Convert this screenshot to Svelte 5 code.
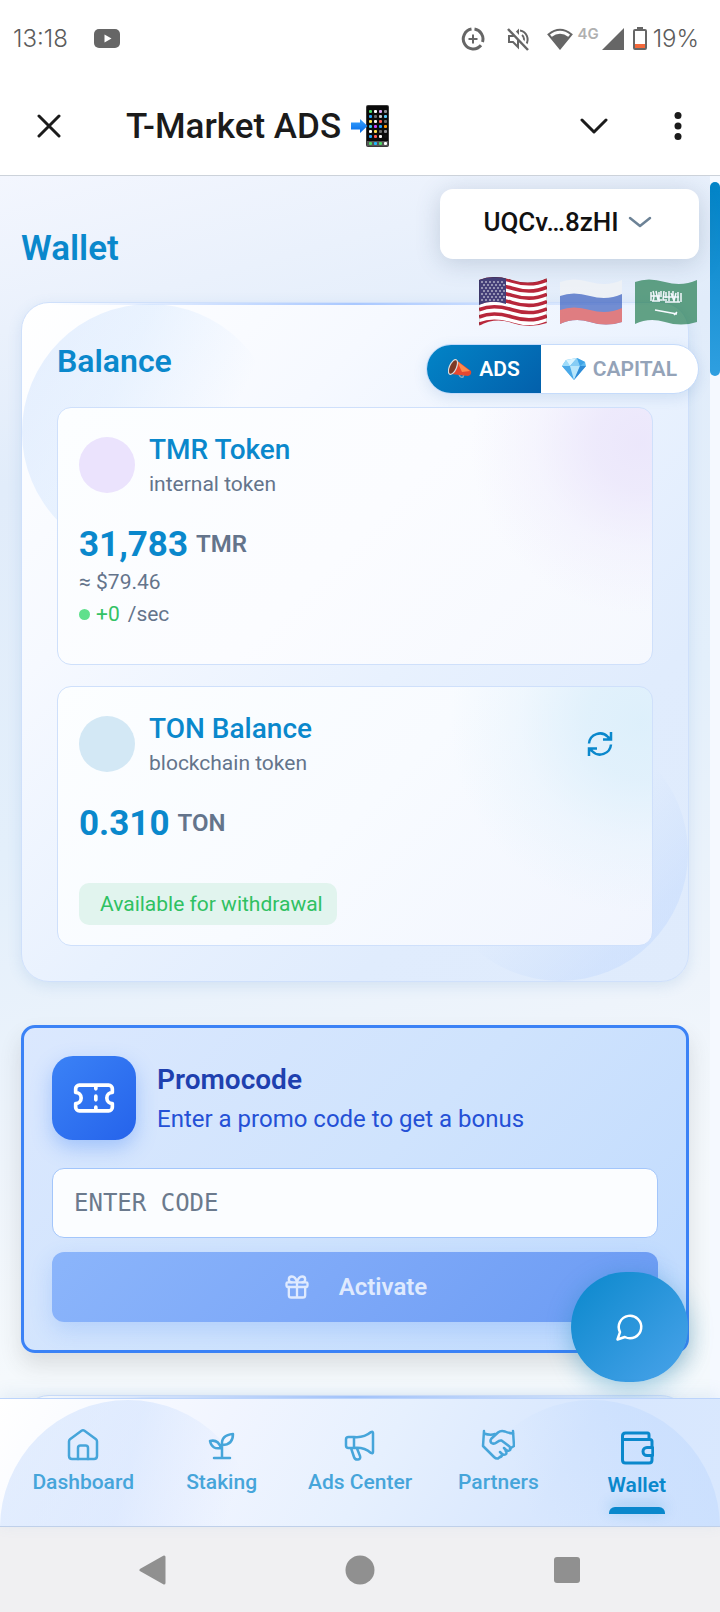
<script>
  let mode = $state('ads');
  let lang = $state('en');
  let code = $state('');
  let activeTab = $state('Wallet');

  const TABS = ['Dashboard', 'Staking', 'Ads Center', 'Partners', 'Wallet'];

  const APP_DOTS = [
    ['#4cd964', '#ffffff', '#d9a3f5', '#8e8e93'],
    ['#1fa2ff', '#6b6b6b', '#c9c9c9', '#5ac8fa'],
    ['#ffe14d', '#f5f5f5', '#ff5a4f', '#6b6b6b'],
    ['#34c8e8', '#c643fc', '#1fa2ff', '#ff9500'],
    ['#ffffff', '#ffe14d', '#6b6b6b', '#8e8e93'],
    ['#1fa2ff', '#ff5a4f', '#f5f5f5', '#111111'],
  ];
  const DOCK_DOTS = ['#4cd964', '#1fb6ff', '#4cd964', '#ffffff'];

  const STARS = [0, 1, 2, 3, 4, 5, 6].flatMap((r) => [0, 1, 2, 3, 4, 5].map((c) => [4 + c * 4 + (r % 2) * 2, 5 + r * 3]));
</script>

<div class="screen">
  <header class="status-bar">
    <span class="clock">13:18</span>
    <svg class="yt" width="26" height="19" viewBox="0 0 26 19"><rect width="26" height="19" rx="5" fill="#666" /><path d="M10.500 5.500v8l7-4z" fill="#fff" /></svg>
    <div class="spacer"></div>
    <svg class="saver" width="24" height="24" viewBox="0 0 24 24" fill="none" stroke="#666">
      <path d="M13.500 2.100A10 10 0 0 1 21.500 15M20 18.300A10 10 0 1 1 10.500 2.100" stroke-width="3" />
      <path d="M12 7.500v9M7.500 12h9" stroke-width="2" />
    </svg>
    <svg class="mute" width="24" height="24" viewBox="0 0 24 24" fill="none" stroke="#666" stroke-width="2">
      <path d="M2 9h4l5-5v16l-5-5H2zM15 8a5 5 0 0 1 0 8M13 3.500a9 9 0 0 1 6 14" />
      <path d="M3 1l19 21" stroke="#fff" stroke-width="4" />
      <path d="M1 2l20 21" stroke-width="2.500" />
    </svg>
    <svg class="wifi" width="26" height="22" viewBox="0 0 26 22"><path d="M1.500 6.500Q13-3 24.500 6.500L13 20.500z" fill="#fff" stroke="#666" stroke-width="2" /><path d="M4.500 9Q13 2.500 21.500 9L13 20.500z" fill="#666" /></svg>
    <span class="net">4G</span>
    <svg class="signal" width="22" height="22" viewBox="0 0 22 22"><path d="M22 0v22H0z" fill="#666" /></svg>
    <svg class="battery" width="14" height="23" viewBox="0 0 14 23"><path d="M4 0h6v3H4z" fill="#666" /><rect x="1" y="3" width="12" height="19" rx="1" fill="#fff" stroke="#666" stroke-width="2" /><path d="M2 17h10v4H2z" fill="#f4693b" /></svg>
    <span class="pct">19%</span>
  </header>

  <div class="title-bar">
    <button class="icon-btn" aria-label="Close">
      <svg width="24" height="24" viewBox="0 0 24 24" fill="none" stroke="#1b1b1b" stroke-width="3" stroke-linecap="round"><path d="M2 2l20 20M22 2L2 22" /></svg>
    </button>
    <h1>T-Market ADS</h1>
    <svg class="phone" width="39" height="42" viewBox="0 0 39 42">
      <defs><linearGradient id="arrow" x2="0" y2="1"><stop stop-color="#3ba4ff" /><stop offset="1" stop-color="#0069e8" /></linearGradient></defs>
      <rect x="15" width="23" height="42" rx="2" fill="#3a3a3a" /><rect x="16" y="1" width="21" height="40" rx="1" fill="#0a0a0a" />
      {#each APP_DOTS as row, r (r)}
        {#each row as fill, c (c)}
          <rect x={18 + c * 5} y={5 + r * 5} width="3" height="3" rx="1" {fill} />
        {/each}
      {/each}
      <rect x="16" y="36" width="21" height="5" fill="#555" />
      {#each DOCK_DOTS as fill, c (c)}
        <rect x={18 + c * 5} y="37" width="3" height="3" rx="1" {fill} />
      {/each}
      <path d="M0 17.500h9V14l7.500 7L9 28v-3.500H0z" fill="url(#arrow)" />
    </svg>
    <div class="spacer"></div>
    <button class="icon-btn" aria-label="Minimize">
      <svg width="28" height="16" viewBox="0 0 28 16" fill="none" stroke="#1b1b1b" stroke-width="3" stroke-linecap="round" stroke-linejoin="round"><path d="M2 2l12 12L26 2" /></svg>
    </button>
    <button class="icon-btn more" aria-label="More">
      <svg width="8" height="28" viewBox="0 0 8 28" fill="#1b1b1b"><circle cx="4" cy="3.500" r="3.500" /><circle cx="4" cy="14" r="3.500" /><circle cx="4" cy="24.500" r="3.500" /></svg>
    </button>
  </div>

  <div class="viewport">
    <main>
      <h2>Wallet</h2>

      <section class="card glass">
        <h3>Balance</h3>

        <article class="token tmr">
          <div class="token-head">
            <span class="coin"></span>
            <div>
              <h4>TMR Token</h4>
              <p class="muted">internal token</p>
            </div>
          </div>
          <div class="amount"><strong>31,783</strong><span>TMR</span></div>
          <p class="muted line">≈ $79.46</p>
          <p class="muted line rate"><i class="dot"></i><span class="plus">+0</span>/sec</p>
        </article>

        <article class="token ton">
          <div class="token-head">
            <span class="coin"></span>
            <div>
              <h4>TON Balance</h4>
              <p class="muted">blockchain token</p>
            </div>
            <button class="refresh" aria-label="Refresh">
              <svg width="26" height="26" viewBox="0 0 26 26" fill="none" stroke="#0a88cc" stroke-width="2.500">
                <path d="M2 12.500A11 11 0 0 1 21 6l3 2.500M24 1v7.500h-8" />
                <path d="M24 13.500A11 11 0 0 1 5 20l-3-2.500M2 25v-7.500h8" />
              </svg>
            </button>
          </div>
          <div class="amount"><strong>0.310</strong><span>TON</span></div>
          <span class="badge">Available for withdrawal</span>
        </article>
      </section>

      <section class="promo">
        <div class="promo-head">
          <span class="promo-icon">
            <svg width="44" height="44" viewBox="0 0 24 24" fill="none" stroke="#fff" stroke-width="2" stroke-linecap="round" stroke-linejoin="round">
              <path d="M2 9a3 3 0 0 1 0 6v2a2 2 0 0 0 2 2h16a2 2 0 0 0 2-2v-2a3 3 0 0 1 0-6V7a2 2 0 0 0-2-2H4a2 2 0 0 0-2 2ZM13 5v2M13 17v2M13 11v2" />
            </svg>
          </span>
          <div>
            <h3>Promocode</h3>
            <p>Enter a promo code to get a bonus</p>
          </div>
        </div>
        <input type="text" aria-label="Promo code" placeholder="ENTER CODE" bind:value={code} />
        <button class="activate" disabled={!code}>
          <svg width="28" height="28" viewBox="0 0 24 24" fill="none" stroke="currentColor" stroke-width="2" stroke-linecap="round" stroke-linejoin="round">
            <rect x="3" y="8" width="18" height="4" rx="1" />
            <path d="M12 8v13M19 12v7a2 2 0 0 1-2 2H7a2 2 0 0 1-2-2v-7M7.500 8a2.500 2.500 0 0 1 0-5A4.800 8 0 0 1 12 8a4.800 8 0 0 1 4.500-5 2.500 2.500 0 0 1 0 5" />
          </svg>
          Activate
        </button>
      </section>

      <section class="card glass next"></section>
    </main>

    <div class="track"><div class="thumb"></div></div>

    <aside class="floating">
      <button class="address">
        UQCv…8zHI
        <svg width="24" height="12" viewBox="0 0 24 12" fill="none" stroke="#6c8296" stroke-width="2.500" stroke-linecap="round" stroke-linejoin="round"><path d="M2 2l10 8 10-8" /></svg>
      </button>

      <div class="flags">
        <button class:active={lang === 'en'} onclick={() => lang = 'en'} aria-label="English">
          <svg width="68" height="50" viewBox="0 0 68 50">
            <clipPath id="us"><path d="M0 3Q14-3 33 3T68 1V46Q50 52 33 46T0 49z" /></clipPath>
            <g clip-path="url(#us)">
              <rect width="68" height="52" fill="#fff" />
              {#each [0, 1, 2, 3, 4, 5, 6] as i (i)}
                <path d="M0 {4 + i * 7.2}Q14 {-2 + i * 7.2} 33 {4 + i * 7.2}T68 {3 + i * 7.2}" fill="none" stroke="#b8273b" stroke-width="3.600" />
              {/each}
              <path d="M0 0h27v27Q12 22 0 28z" fill="#453f78" />
              {#each STARS as [x, y], i (i)}
                <circle cx={x - 1} cy={y} r="0.800" fill="#fff" />
              {/each}
              <path d="M0 49V3Q14-3 33 3T68 1V46" fill="none" stroke="#000" stroke-opacity=".25" />
            </g>
          </svg>
        </button>
        <button class:active={lang === 'ru'} onclick={() => lang = 'ru'} aria-label="Русский">
          <svg width="62" height="46" viewBox="0 0 62 46">
            <clipPath id="ru"><path d="M0 3Q13-2 30 3T62 1V43Q46 48 30 43T0 45z" /></clipPath>
            <g clip-path="url(#ru)">
              <rect width="62" height="46" fill="#f5f5f5" />
              <path d="M0 17Q13 12 30 17T62 15V50H0z" fill="#2149b5" />
              <path d="M0 31Q13 26 30 31T62 29V50H0z" fill="#d62f2f" />
            </g>
          </svg>
        </button>
        <button class:active={lang === 'ar'} onclick={() => lang = 'ar'} aria-label="العربية">
          <svg width="62" height="46" viewBox="0 0 62 46">
            <path d="M0 3Q13-2 30 3T62 1V43Q46 48 30 43T0 45z" fill="#066b35" />
            <path d="M16 13v9M18 12q2 5 0 10M21 12l2 9M24 13v8h3M26 12v6M29 12l-1 9h4M31 13v6M34 12v10M36 14l3 8M38 12v6M41 14l-2 8M43 13v10M46 14v9M16 17h9M17 22h8M29 18h15M30 23h15" stroke="#fff" stroke-width="1.500" fill="none" />
            <path d="M20 31l22 4M39 36l3-3" stroke="#fff" stroke-width="1.500" />
          </svg>
        </button>
      </div>

      <div class="mode">
        <button class:active={mode === 'ads'} onclick={() => mode = 'ads'}>
          <svg width="24" height="22" viewBox="0 0 24 22">
            <path d="M11 16q1 4 4 3l1-3" fill="none" stroke="#8fa7b5" stroke-width="1.500" />
            <path d="M7 1L23 13q1 4-3 5L3 16z" fill="#e8482f" /><path d="M9 3l13 10-8 1z" fill="#ff8a4c" />
            <ellipse cx="5" cy="9" rx="3.500" ry="8" transform="rotate(24 5 9)" fill="#7c3a26" stroke="#d8dde0" stroke-width="1.200" />
          </svg>
          ADS
        </button>
        <button class:active={mode === 'capital'} onclick={() => mode = 'capital'}>
          <svg width="24" height="22" viewBox="0 0 24 22">
            <path d="M4 2L15 0l8 4 1 4-12 14L0 8z" fill="#5cb8ef" />
            <path d="M4 2l4 6H0z" fill="#9edcfa" /><path d="M4 2L15 0 8 8z" fill="#d8f4ff" /><path d="M15 0l3 8H8z" fill="#86cdf5" />
            <path d="M15 0l8 4-5 4z" fill="#3fa3e6" /><path d="M0 8h8l4 14z" fill="#4aa9e8" /><path d="M8 8h10l-6 14z" fill="#b7e6fb" /><path d="M18 8h6L12 22z" fill="#2f8bd6" />
          </svg>
          CAPITAL
        </button>
      </div>
    </aside>

    <button class="fab" aria-label="Chat">
      <svg width="30" height="30" viewBox="0 0 24 24" fill="none" stroke="#fff" stroke-width="2" stroke-linecap="round" stroke-linejoin="round"><path d="M7.900 20A9 9 0 1 0 4 16.100L2 22Z" /></svg>
    </button>
  </div>

  <nav class="tabs glass">
    {#each TABS as tab (tab)}
      <button class:active={activeTab === tab} onclick={() => activeTab = tab}>
        <svg width="34" height="34" viewBox="0 0 34 34" fill="none" stroke="currentColor" stroke-width="2.500" stroke-linecap="round" stroke-linejoin="round">
          {#if tab === 'Dashboard'}
            <path d="M3 13.500q0-1.500 1-2.300L15.500 2.800q1.500-1 3 0L30 11.200q1 .8 1 2.300V28q0 3-3 3H6q-3 0-3-3z" />
            <path d="M12 31V20q0-2.500 2.500-2.500h5Q22 17.500 22 20v11" />
          {:else if tab === 'Staking'}
            <path d="M17 30V17M9 30h16M5 13q8-2 11 7-9 2-11-7zM17 17q-1-10 11-11 0 11-11 11z" />
          {:else if tab === 'Ads Center'}
            <path d="M11 9H5.500Q3 9 3 11.500v6Q3 20 5.500 20H11zM11 9q10 1 17-5 2-1 2 1v19q0 2-2 1-7-6-17-5M8 20l3 9q1 3 4 2.500t2-3.500l-3-7.500" />
          {:else if tab === 'Partners'}
            <path d="M3 3L2 18l5 5 6 6q2 2 4 1.500l2.500-2M32 3l1 15-4 2.500M3 5.500q6 2 11 .5" />
            <path d="M32 5.500q-5-.5-8-2-4-1.500-7 1l-6.500 6q-2 2.500 0 4.500 2.500 1.500 5-.5 3-2.500 5-2l8 6q2 3 0 4t-4-1l-1.500-1.500M24.500 22.500q2 3 0 4t-4-1l-1.500-1.500M20.500 25.500q1.500 2.500-1 3.500" />
          {:else}
            <path d="M2.500 9V5q0-3 3-3h22Q29 2 29 4v4.500M2.500 8.500H30q2 0 2 2V16M2.500 8.500V29q0 3 3 3H29q3 0 3-3v-4" stroke-width="3" />
            <path d="M32 16.500h-5a4 4 0 0 0 0 8h5q.8 0 .8-1v-6q0-1-.8-1z" stroke-width="3" />
          {/if}
        </svg>
        <span>{tab}</span>
      </button>
    {/each}
  </nav>

  <div class="system-nav">
    <button aria-label="Back"><svg width="28" height="30" viewBox="0 0 28 30"><path d="M2 15L25 2v26z" fill="#909090" stroke="#909090" stroke-width="3" stroke-linejoin="round" /></svg></button>
    <button aria-label="Home"><svg width="30" height="30" viewBox="0 0 30 30"><circle cx="15" cy="15" r="14.500" fill="#909090" /></svg></button>
    <button aria-label="Recent apps"><svg width="28" height="28" viewBox="0 0 28 28"><rect x="1" y="1" width="26" height="26" rx="3" fill="#909090" /></svg></button>
  </div>
</div>

<style>
  :global(body) { margin: 0; }

  .screen {
    display: flex;
    flex-direction: column;
    height: 100vh;
    overflow: hidden;
    background: #fff;
    font-family: Roboto, "Liberation Sans", sans-serif;
    color: #64748b;
  }
  h1, h2, h3, h4, p { margin: 0; }
  button { padding: 0; border: none; background: none; font: inherit; color: inherit; cursor: pointer; }
  svg { display: block; flex-shrink: 0; }
  .spacer { flex: 1; }

  .status-bar {
    display: flex;
    align-items: center;
    height: 77px;
    padding: 0 21px 0 13px;
    box-sizing: border-box;
    font-family: Inter, sans-serif;
    font-size: 24px;
    font-weight: 300;
    color: #5c5c5c;
  }
  .yt { margin-left: 26px; }
  .saver { margin-right: 22px; }
  .mute { margin-right: 16px; }
  .net { align-self: flex-start; margin: 24px 3px 0 4px; font-size: 15px; font-weight: 600; color: #b0b0b0; }
  .battery { margin: 0 6px 0 9px; }

  .title-bar {
    display: flex;
    align-items: center;
    height: 98px;
    padding: 0 38px 0 37px;
    border-bottom: 1px solid #ccd2da;
    color: #1b1b1b;
  }
  .title-bar h1 { margin: 0 10px 0 65px; font-size: 35px; font-weight: 500; }
  .more { margin-left: 66px; }

  .viewport {
    position: relative;
    flex: 1;
    display: flex;
    min-height: 0;
    overflow: hidden;
    background: linear-gradient(165deg, #f3f6fe 0%, #e1ecfa 22%, #e3effb 48%, #eef4fb 70%, #f5f9fc 85%, #f4f9fc 100%);
  }
  main {
    flex: 1;
    min-width: 0;
    padding: 53px 21px 0;
  }
  .track { width: 10px; padding-top: 6px; background: #f5f9ff; }
  .thumb { height: 194px; border-radius: 5px; background: linear-gradient(#0284c7, #2f9fe0); }

  h2 { margin-bottom: 33px; font-size: 35px; line-height: 40px; font-weight: 600; color: #0a88cc; }

  .glass {
    position: relative;
    overflow: hidden;
    background:
      linear-gradient(90deg, transparent 4%, #a9c8ff 50%, transparent 96%) top / 100% 2px no-repeat,
      linear-gradient(135deg, #ffffff 0%, #f6f9ff 28%, #e8f1fe 55%, #e0ecfd 75%, #dfebfc 100%);
  }
  .glass > * { position: relative; }
  /* soft corner discs */
  .glass::before,
  .glass::after {
    content: '';
    position: absolute;
    width: 256px;
    height: 256px;
    border-radius: 50%;
    pointer-events: none;
  }
  .glass::before {
    top: 1px;
    left: 0;
    background: linear-gradient(115deg, rgba(191, 215, 252, .4), rgba(191, 219, 254, .3) 35%, rgba(191, 219, 254, 0) 70%);
  }
  .glass::after {
    right: 0;
    bottom: 0;
    background: linear-gradient(315deg, rgba(191, 215, 254, .5), rgba(191, 215, 254, .4) 20%, rgba(191, 219, 254, 0) 48%);
  }

  .card {
    padding: 35px;
    border: 1px solid #cfe0fb;
    border-radius: 28px;
    box-shadow: 0 4px 14px rgba(90, 140, 200, .16);
  }
  .card h3 { margin-bottom: 23px; font-size: 32px; line-height: 46px; font-weight: 600; color: #0a88cc; }

  .token {
    z-index: 1;
    padding: 22px 21px 20px;
    border: 1px solid #cfe0fb;
    border-radius: 14px;
  }
  .token + .token { margin-top: 21px; }
  .tmr {
    background:
      radial-gradient(circle at 98% 14%, rgba(235, 230, 251, .95) 0, rgba(235, 230, 251, .8) 45px, rgba(235, 230, 251, .3) 105px, rgba(235, 230, 251, 0) 170px),
      linear-gradient(135deg, #fcfeff, #fbfcff 50%, #f5f8fe);
  }
  .ton {
    background:
      radial-gradient(circle at 98% 14%, rgba(220, 239, 251, .95) 0, rgba(220, 239, 251, .8) 55px, rgba(220, 239, 251, .3) 120px, rgba(220, 239, 251, 0) 190px),
      linear-gradient(135deg, #fcfeff, #f8fbff 50%, #f1f5fe);
  }
  .token-head { display: flex; align-items: center; gap: 14px; margin-bottom: 23px; }
  .coin { width: 56px; height: 56px; border-radius: 50%; background: #ebe3fd; }
  .ton .coin { background: #d3e8f5; }
  h4 { font-size: 28px; line-height: 39px; font-weight: 500; color: #0a88cc; }
  .muted { font-size: 21px; line-height: 30px; }
  .line { line-height: 32px; }
  .refresh { margin: 0 18px 0 auto; }

  .amount { display: flex; align-items: center; gap: 8px; height: 44px; }
  .amount strong { font-size: 35px; font-weight: 700; color: #0a88cc; }
  .amount span { font-size: 24px; font-weight: 600; }
  .rate { display: flex; align-items: center; gap: 6px; margin-bottom: 14px; }
  .dot { width: 11px; height: 11px; border-radius: 50%; background: #5fe08c; }
  .plus { margin-right: 2px; color: #34c265; }
  .badge {
    display: inline-block;
    margin-top: 38px;
    padding: 0 14px 0 21px;
    border-radius: 10px;
    background: #e1f4ee;
    font-size: 21px;
    line-height: 42px;
    color: #2fc162;
    vertical-align: top;
  }

  .promo {
    margin: 43px 0 42px;
    padding: 28px;
    border: 3px solid #3b82f6;
    border-radius: 14px;
    background: linear-gradient(135deg, #dbe8fe, #cfe3fd 50%, #bfdafe);
    box-shadow: 0 12px 22px rgba(60, 60, 60, .14);
  }
  .promo-head { display: flex; align-items: center; gap: 21px; margin-bottom: 28px; }
  .promo-icon {
    display: grid;
    place-items: center;
    width: 84px;
    height: 84px;
    border-radius: 21px;
    background: linear-gradient(135deg, #3b82f6, #2563eb);
    box-shadow: 0 8px 20px rgba(59, 130, 246, .35);
  }
  .promo h3 { font-size: 28px; line-height: 42px; font-weight: 600; color: #1e40af; }
  .promo p { font-size: 24px; line-height: 36px; color: #2450d6; }
  .promo input {
    display: block;
    width: 100%;
    height: 70px;
    padding: 0 21px;
    box-sizing: border-box;
    border: 1px solid #a3c6fb;
    border-radius: 12px;
    background: #fbfdff;
    font: 24px "DejaVu Sans Mono", monospace;
    color: #1e40af;
  }
  .promo input::placeholder { color: #6b7a8d; opacity: 1; }
  .activate {
    display: flex;
    align-items: center;
    justify-content: center;
    gap: 28px;
    width: 100%;
    height: 70px;
    margin-top: 14px;
    border-radius: 12px;
    background: linear-gradient(135deg, #8bb5fb, #7ea9f8 45%, #6b9bf3);
    box-shadow: 0 8px 22px rgba(59, 130, 246, .2);
    font-size: 24px;
    font-weight: 600;
    color: #dfeafe;
  }
  .next { height: 200px; }

  .floating {
    position: absolute;
    top: 13px;
    right: 21px;
    display: flex;
    flex-direction: column;
    align-items: flex-end;
  }
  .address {
    display: flex;
    align-items: center;
    justify-content: center;
    gap: 9px;
    width: 259px;
    height: 70px;
    padding: 0 4px 5px 0;
    border-radius: 13px;
    background: #fff;
    box-shadow: 0 4px 24px rgba(60, 85, 120, .22);
    font-size: 26px;
    font-weight: 500;
    color: #111;
  }
  .flags { display: flex; align-items: center; gap: 13px; height: 50px; margin: 18px 2px 0 0; }
  .flags button { opacity: .6; }
  .flags .active { opacity: 1; }
  .mode {
    display: flex;
    height: 48px;
    margin-top: 17px;
    overflow: hidden;
    border: 1px solid #c5dbfb;
    border-radius: 25px;
    background: #fff;
    box-shadow: 0 4px 14px rgba(60, 110, 180, .14);
  }
  .mode button {
    display: flex;
    align-items: center;
    gap: 7px;
    padding: 0 21px;
    font-size: 21px;
    font-weight: 600;
    color: #94a3b8;
  }
  .mode .active { background: linear-gradient(135deg, #0284c7, #0360ab); color: #fff; }

  .fab {
    position: absolute;
    right: 32px;
    bottom: 16px;
    display: grid;
    place-items: center;
    width: 117px;
    height: 110px;
    border-radius: 56px;
    background: linear-gradient(135deg, #0a88cc, #4aa3ea);
    box-shadow: 0 6px 24px rgba(20, 130, 180, .4);
  }

  .tabs {
    display: flex;
    height: 129px;
    padding: 0 14px;
    border-top: 1px solid #bcd4fb;
    border-bottom: 1px solid #bfd0ea;
    box-sizing: border-box;
    background: linear-gradient(120deg, #ffffff 0%, #f1f5ff 30%, #e6f0fe 52%, #d8e7fe 76%, #d9e8fe 100%);
    box-shadow: 0 -4px 16px rgba(90, 140, 200, .12);
  }
  /* both discs hang from the top edge here */
  .tabs::before {
    background: linear-gradient(105deg, rgba(191, 215, 252, .42), rgba(191, 215, 254, .4) 45%, rgba(191, 219, 254, 0) 80%);
  }
  .tabs::after {
    top: 1px;
    bottom: auto;
    background: linear-gradient(250deg, rgba(180, 210, 254, .4), rgba(186, 214, 254, .35) 30%, rgba(191, 219, 254, 0) 66%);
  }
  .tabs button {
    z-index: 1;
    flex: 1;
    display: flex;
    flex-direction: column;
    align-items: center;
    padding-top: 29px;
    font-size: 21px;
    line-height: 28px;
    font-weight: 500;
    color: #46a5da;
  }
  .tabs svg { margin-bottom: 6px; }
  .tabs .active { padding-top: 32px; font-weight: 600; color: #0a88cc; }
  .tabs .active::after {
    content: '';
    width: 56px;
    height: 7px;
    margin-top: 8px;
    border-radius: 6px 6px 0 0;
    background: #0a88cc;
    box-shadow: 0 -3px 14px rgba(10, 136, 204, .3);
  }

  .system-nav {
    display: flex;
    justify-content: center;
    align-items: center;
    gap: 178px;
    height: 85px;
    background: #f0f0f2;
  }
</style>
